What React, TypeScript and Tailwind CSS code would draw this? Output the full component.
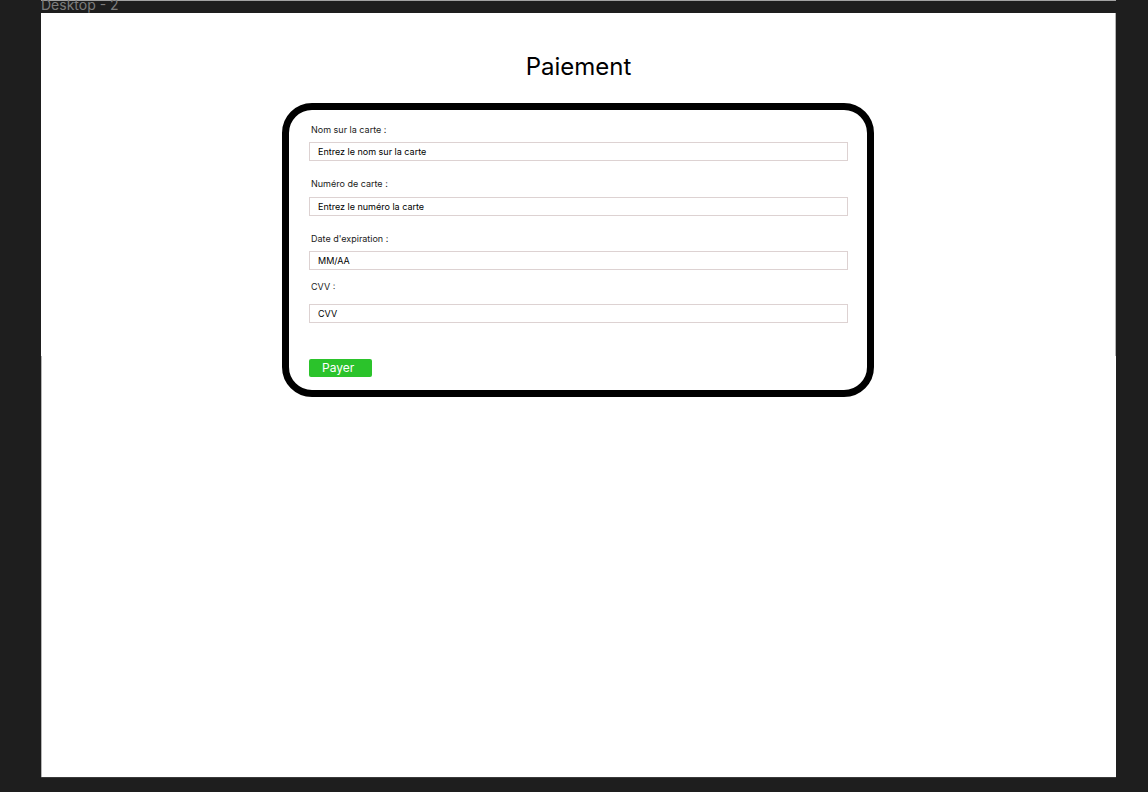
import React from "react";

const fields = [
  { label: "Nom sur la carte :", placeholder: "Entrez le nom sur la carte", lm: "mt-[14px]", im: "mt-[6px]" },
  { label: "Numéro de carte :", placeholder: "Entrez le numéro la carte", lm: "mt-[17px]", im: "mt-[7px]" },
  { label: "Date d'expiration :", placeholder: "MM/AA", lm: "mt-[17px]", im: "mt-[6px]" },
  { label: "CVV :", placeholder: "CVV", lm: "mt-[11px]", im: "mt-[11px]" },
];

export default function App() {
  return (
    <div
      className="w-full h-[792px] bg-[#1e1e1e] overflow-hidden"
      style={{ fontFamily: "Inter, 'Liberation Sans', sans-serif" }}
    >
      <div className="ml-[41px] w-[1075px] h-[13px] relative overflow-hidden">
        <div className="h-[1px] w-[1075px] bg-[#a3a3a3]" />
        <div className="absolute left-0 top-[-4px] text-[14px] leading-[17px] text-[#7c7c7c]">Desktop - 2</div>
      </div>
      <div className="ml-[41px] w-[1075px] h-[765px] bg-white relative flex flex-col items-center">
        <div className="absolute right-0 top-0 w-[1px] h-[343px] bg-[#b5b5b5]" />
        <div className="absolute left-0 top-[343px] w-[1px] h-[422px] bg-[#b5b5b5]" />
        <div className="absolute left-0 bottom-0 w-full h-[1px] bg-[#3a3a3a]" />
        <h1 className="mt-[39px] text-[24px] leading-[30px] text-black">Paiement</h1>
        <div className="mt-[21px] mr-[1px] w-[592px] h-[294px] border-[7px] border-black rounded-[30px] pl-[20px] pr-[19px] flex flex-col">
          {fields.map((f) => (
            <React.Fragment key={f.label}>
              <div className={`${f.lm} ml-[2px] text-[9px] leading-[12px] text-[#1a1a1a]`}>{f.label}</div>
              <div className={`${f.im} h-[19px] border border-[#ddd2d2] pl-[8px] flex items-center text-[9px] text-black`}>
                {f.placeholder}
              </div>
            </React.Fragment>
          ))}
          <div className="mt-[36px] w-[63px] h-[18px] bg-[#2bc32b] rounded-[2px] pl-[13px] flex items-center text-[12px] text-white">
            Payer
          </div>
        </div>
      </div>
    </div>
  );
}
